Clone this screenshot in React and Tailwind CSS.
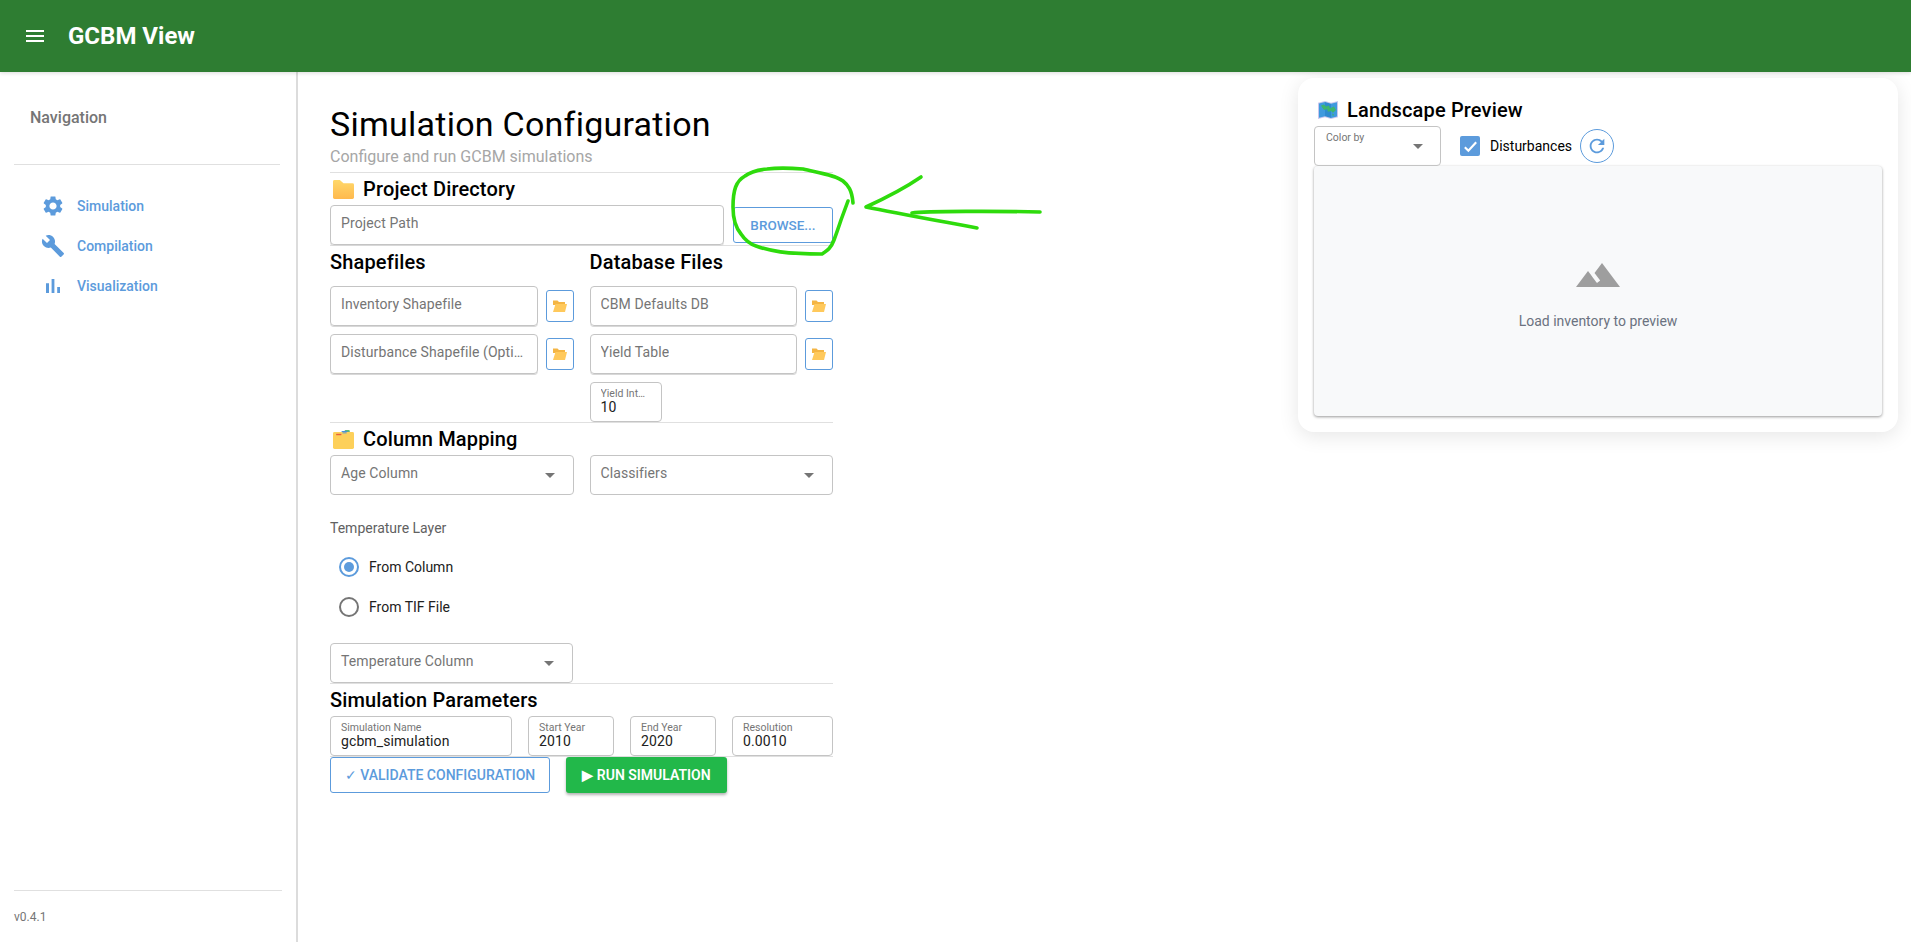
const BLUE = '#5c9bdc'

function MuiIcon({ d, className }) {
  return (
    <svg viewBox="0 0 24 24" fill="currentColor" className={className}>
      <path d={d} />
    </svg>
  )
}

const ICONS = {
  menu: 'M3 18h18v-2H3v2zm0-5h18v-2H3v2zm0-7v2h18V6H3z',
  settings: 'M19.14 12.94c.04-.3.06-.61.06-.94 0-.32-.02-.64-.07-.94l2.03-1.58c.18-.14.23-.41.12-.61l-1.92-3.32c-.12-.22-.37-.29-.59-.22l-2.39.96c-.5-.38-1.03-.7-1.62-.94l-.36-2.54c-.04-.24-.24-.41-.48-.41h-3.84c-.24 0-.43.17-.47.41l-.36 2.54c-.59.24-1.13.57-1.62.94l-2.39-.96c-.22-.08-.47 0-.59.22L2.74 8.87c-.12.21-.08.47.12.61l2.03 1.58c-.05.3-.09.63-.09.94s.02.64.07.94l-2.03 1.58c-.18.14-.23.41-.12.61l1.92 3.32c.12.22.37.29.59.22l2.39-.96c.5.38 1.03.7 1.62.94l.36 2.54c.05.24.24.41.48.41h3.84c.24 0 .44-.17.47-.41l.36-2.54c.59-.24 1.13-.56 1.62-.94l2.39.96c.22.08.47 0 .59-.22l1.92-3.32c.12-.22.07-.47-.12-.61l-2.01-1.58zM12 15.6c-1.98 0-3.6-1.62-3.6-3.6s1.62-3.6 3.6-3.6 3.6 1.62 3.6 3.6-1.62 3.6-3.6 3.6z',
  build: 'M22.7 19l-9.1-9.1c.9-2.3.4-5-1.5-6.9-2-2-5-2.4-7.4-1.3L9 6 6 9 1.6 4.7C.4 7.1.9 10.1 2.9 12.1c1.9 1.9 4.6 2.4 6.9 1.5l9.1 9.1c.4.4 1 .4 1.4 0l2.3-2.3c.5-.4.5-1.1.1-1.4z',
  bars: 'M5 9.2h3V19H5zM10.6 5h2.8v14h-2.8zm5.6 8H19v6h-2.8z',
  terrain: 'M14 6l-3.75 5 2.85 3.8-1.6 1.2C9.81 13.75 7 10 7 10l-6 8h22L14 6z',
  refresh: 'M17.65 6.35C16.2 4.9 14.21 4 12 4c-4.42 0-7.99 3.58-7.99 8s3.57 8 7.99 8c3.73 0 6.84-2.55 7.73-6h-2.08c-.82 2.33-3.04 4-5.65 4-3.31 0-6-2.69-6-6s2.69-6 6-6c1.66 0 3.14.69 4.22 1.78L13 11h7V4l-2.35 2.35z',
}

function FolderEmoji({ className }) {
  return (
    <svg viewBox="0 0 20 20" preserveAspectRatio="none" className={className}>
      <defs>
        <linearGradient id="folderFill" x1="0" y1="0" x2="0" y2="1">
          <stop offset="0" stopColor="#ffd86a" />
          <stop offset="1" stopColor="#ffb94e" />
        </linearGradient>
      </defs>
      <path d="M0 1.500q0-1.500 1.500-1.500h5l3.500 3.500h8.500q1.500 0 1.500 1.500V18.500q0 1.500-1.500 1.500H1.500q-1.500 0-1.500-1.500z" fill="url(#folderFill)" />
    </svg>
  )
}

function OpenFolderEmoji({ className }) {
  return (
    <svg viewBox="0 0 14 12" preserveAspectRatio="none" className={className}>
      <path d="M0 .500h4.500l1.500 1.500h6v3H0z" fill="#f4b544" />
      <path d="M2.500 4H14l-2 8H0z" fill="#ffc95c" />
    </svg>
  )
}

function DividersEmoji({ className }) {
  return (
    <svg viewBox="0 0 20 20" preserveAspectRatio="none" className={className}>
      <rect x="11" y="0" width="5" height="3" rx="1" fill="#5fb97a" />
      <rect x="8" y="1" width="6" height="3" rx="1" fill="#4a90d9" />
      <rect x="0" y="2" width="20" height="18" rx="1.500" fill="#fdd05a" />
      <rect x="3" y="4" width="5" height="1.500" fill="#e8603c" />
      <rect x="9" y="2.500" width="4" height="1" fill="#4a90d9" />
    </svg>
  )
}

function MapEmoji({ className }) {
  return (
    <svg viewBox="0 0 20 20" preserveAspectRatio="none" className={className}>
      <path d="M0 2l7-2 6 2 7-2v18l-7 2-6-2-7 2z" fill="#c9c6ee" />
      <path d="M1 2.700l6-1.700v16l-6 1.700z" fill="#3f9ade" />
      <path d="M7 1l6 2v16l-6-2z" fill="#2f8bcf" />
      <path d="M13 3l6-1.700v16l-6 1.700z" fill="#3f9ade" />
      <path d="M3 5l3-1 2 2 3-1 1 3 4-2 2 4-3 3-2-2-3 1-1-3-3 1-2-3zM14 14l2 1-1 2z" fill="#3fb56f" />
    </svg>
  )
}

function Divider() {
  return <hr className="border-0 h-px bg-[#e0e0e0]" />
}

function SectionTitle({ icon, children }) {
  return (
    <div className="h-[32px] flex items-center">
      {icon}
      <h2 className="text-[20px] font-medium leading-none tracking-[0.15px] text-black">{children}</h2>
    </div>
  )
}

function TextField({ label, className }) {
  return (
    <div className={`h-[40px] rounded-[4px] border border-[#c4c4c4] shadow-[0_1px_0_#d8d8d8] flex items-center pl-[10px] pr-3 pb-[3px] min-w-0 ${className}`}>
      <span className="truncate text-[14px] text-[#757575] tracking-[0.1px]">{label}</span>
    </div>
  )
}

function ValueField({ label, value, className }) {
  return (
    <div className={`h-[40px] rounded-[4px] border border-[#c4c4c4] pl-[10px] pb-[3px] flex flex-col justify-center min-w-0 ${className}`}>
      <span className="truncate text-[10.5px] leading-[13px] text-[#757575]">{label}</span>
      <span className="text-[14px] leading-[15px] tracking-[0.1px] text-[#212121]">{value}</span>
    </div>
  )
}

function SelectField({ label, className }) {
  return (
    <div className={`h-[40px] rounded-[4px] border border-[#c4c4c4] flex items-center justify-between pl-[10px] pr-[18px] ${className}`}>
      <span className="text-[14px] text-[#757575] tracking-[0.1px] pb-[3px]">{label}</span>
      <span className="w-0 h-0 border-x-[5px] border-t-[5px] border-x-transparent border-t-[#757575]" />
    </div>
  )
}

function FileRow({ label }) {
  return (
    <div className="flex items-center gap-[8px]">
      <TextField label={label} className="flex-1" />
      <button className="w-[28px] h-[32px] rounded-[3px] border border-[#5c9bdc] flex items-center justify-center shrink-0">
        <OpenFolderEmoji className="w-[14px] h-[12px]" />
      </button>
    </div>
  )
}

function NavItem({ icon, label }) {
  return (
    <div className="h-[40px] flex items-center">
      <div className="w-[24px] ml-[41px] flex justify-center" style={{ color: BLUE }}>
        <MuiIcon d={icon} className="w-[24px] h-[24px]" />
      </div>
      <span className="ml-[12px] text-[14px] font-medium leading-none" style={{ color: BLUE }}>{label}</span>
    </div>
  )
}

function Radio({ checked, label }) {
  return (
    <div className="h-[40px] flex items-center pl-[9px]">
      {checked ? (
        <span className="w-[20px] h-[20px] rounded-full border-2 border-[#5c9bdc] flex items-center justify-center">
          <span className="w-[10px] h-[10px] rounded-full bg-[#5c9bdc]" />
        </span>
      ) : (
        <span className="w-[20px] h-[20px] rounded-full border-2 border-[#757575]" />
      )}
      <span className="ml-[10px] text-[14px] text-[#212121]">{label}</span>
    </div>
  )
}

function Annotation() {
  // hand-drawn marker on top of the screenshot
  return (
    <svg className="absolute left-0 top-0 w-full h-full pointer-events-none" viewBox="0 0 1911 942" fill="none" stroke="#2edb0c" strokeWidth="3.600" strokeLinecap="round" strokeLinejoin="round">
      <path d="M853 203C852 190 848 185 843 181C835 175 820 173 803 169C790 168 775 168 767 169C757 170 750 172 745 176C736 181 733 190 733 207C733 220 736 228 741 234C745 240 750 244 756 246C770 251 785 254 822 254C828 250 831 248 834 240C837 232 839 226 841 220L848 201" />
      <path d="M921 177C905 188 890 196 866 207C895 213 945 222 977 228" />
      <path d="M912 213C925 211 1000 211 1040 212" />
    </svg>
  )
}

export default function App() {
  return (
    <div className="relative h-[942px] bg-white font-['Roboto',sans-serif] overflow-hidden flex flex-col">
      {/* Top bar */}
      <header className="relative z-10 h-[72px] bg-[#2e7d32] flex items-center shrink-0 shadow-[0_1px_4px_rgba(0,0,0,0.15)]">
        <MuiIcon d={ICONS.menu} className="w-[24px] h-[24px] ml-[23px] text-white" />
        <h1 className="ml-[21px] text-[24px] font-bold text-white leading-none">GCBM View</h1>
      </header>

      <div className="flex flex-1 min-h-0">
        {/* Sidebar */}
        <aside className="w-[298px] shrink-0 border-r-2 border-[#dcdcdc] flex flex-col">
          <p className="mt-[37px] ml-[30px] text-[16px] font-medium leading-[18px] text-[#757575]">Navigation</p>
          <hr className="mt-[37px] ml-[14px] mr-[16px] border-0 h-px bg-[#e0e0e0]" />
          <nav className="mt-[21px] flex flex-col">
            <NavItem icon={ICONS.settings} label="Simulation" />
            <NavItem icon={ICONS.build} label="Compilation" />
            <NavItem icon={ICONS.bars} label="Visualization" />
          </nav>
          <div className="mt-auto mx-[14px] h-[52px]">
            <hr className="border-0 h-px bg-[#e0e0e0]" />
            <p className="mt-[19px] text-[12px] leading-[14px] text-[#757575]">v0.4.1</p>
          </div>
        </aside>

        {/* Main column */}
        <main className="w-[503px] ml-[32px] pt-[30px] shrink-0">
          <h1 className="h-[44px] text-[34px] leading-[44px] tracking-[0.25px] text-black">Simulation Configuration</h1>
          <p className="h-[22px] text-[16px] leading-[22px] text-[#a6a6a6]">Configure and run GCBM simulations</p>
          <div className="mt-[4px]"><Divider /></div>

          <SectionTitle icon={<FolderEmoji className="w-[21px] h-[19px] ml-[3px] mr-[9px]" />}>Project Directory</SectionTitle>
          <div className="flex items-center gap-[9px]">
            <TextField label="Project Path" className="flex-1" />
            <button className="w-[100px] h-[36px] rounded-[3px] border border-[#5c9bdc] text-[13.5px] font-medium text-[#5c9bdc]">BROWSE...</button>
          </div>
          <Divider />

          <div className="grid grid-cols-2 gap-x-[16px]">
            <div className="flex flex-col gap-[8px]">
              <div className="h-[32px] flex items-center text-[20px] font-medium leading-none tracking-[0.15px] text-black">Shapefiles</div>
              <FileRow label="Inventory Shapefile" />
              <FileRow label="Disturbance Shapefile (Optional)" />
            </div>
            <div className="flex flex-col gap-[8px]">
              <div className="h-[32px] flex items-center text-[20px] font-medium leading-none tracking-[0.15px] text-black">Database Files</div>
              <FileRow label="CBM Defaults DB" />
              <FileRow label="Yield Table" />
              <ValueField label="Yield Interval" value="10" className="w-[72px] pr-[12px]" />
            </div>
          </div>
          <Divider />

          <SectionTitle icon={<DividersEmoji className="w-[21px] h-[19px] ml-[3px] mr-[9px]" />}>Column Mapping</SectionTitle>
          <div className="grid grid-cols-2 gap-x-[16px]">
            <SelectField label="Age Column" />
            <SelectField label="Classifiers" />
          </div>

          <p className="mt-[24px] text-[14px] leading-[18px] text-[#616161]">Temperature Layer</p>
          <div className="mt-[10px] flex flex-col">
            <Radio checked label="From Column" />
            <Radio label="From TIF File" />
          </div>
          <SelectField label="Temperature Column" className="mt-[16px] w-[243px]" />
          <Divider />

          <div className="h-[32px] flex items-center text-[20px] font-medium leading-none tracking-[0.15px] text-black">Simulation Parameters</div>
          <div className="flex gap-[16px]">
            <ValueField label="Simulation Name" value="gcbm_simulation" className="w-[182px]" />
            <ValueField label="Start Year" value="2010" className="w-[86px]" />
            <ValueField label="End Year" value="2020" className="w-[86px]" />
            <ValueField label="Resolution" value="0.0010" className="flex-1" />
          </div>
          <Divider />
          <div className="flex gap-[16px]">
            <button className="w-[220px] h-[36px] rounded-[3px] border border-[#5c9bdc] text-[14px] font-medium text-[#5c9bdc]"><span className="font-light">✓</span> VALIDATE CONFIGURATION</button>
            <button className="w-[161px] h-[36px] rounded-[3px] bg-[#22b84a] text-[14px] font-semibold text-white shadow-[0_2px_3px_rgba(0,0,0,0.3)]">▶ RUN SIMULATION</button>
          </div>
        </main>

        {/* Preview panel */}
        <section className="ml-auto mr-[13px] mt-[6px] w-[600px] h-[354px] rounded-[16px] bg-white shadow-[0_4px_20px_rgba(0,0,0,0.1)] px-[16px] pt-[16px] flex flex-col">
          <div className="h-[32px] flex items-center">
            <MapEmoji className="w-[20px] h-[18px] ml-[4px] mr-[9px]" />
            <h2 className="text-[20px] font-medium leading-none tracking-[0.15px] text-black">Landscape Preview</h2>
          </div>
          <div className="flex items-center h-[40px]">
            <div className="relative w-[127px] h-[40px] rounded-[4px] border border-[#c4c4c4] flex items-center justify-end pr-[17px]">
              <span className="absolute left-[11px] top-[4px] text-[10.5px] leading-[13px] text-[#757575]">Color by</span>
              <span className="w-0 h-0 border-x-[5px] border-t-[5px] border-x-transparent border-t-[#757575]" />
            </div>
            <span className="ml-[19px] w-[20px] h-[20px] rounded-[2px] bg-[#5c9bdc] flex items-center justify-center">
              <svg viewBox="0 0 24 24" className="w-[17px] h-[17px]" fill="none" stroke="white" strokeWidth="3"><path d="M4 13l5 5L20 6" /></svg>
            </span>
            <span className="ml-[10px] text-[14px] text-black">Disturbances</span>
            <button className="ml-[8px] w-[34px] h-[34px] rounded-full border border-[#5c9bdc] flex items-center justify-center text-[#5c9bdc]">
              <MuiIcon d={ICONS.refresh} className="w-[22px] h-[22px]" />
            </button>
          </div>
          <div className="h-[250px] rounded-[4px] bg-[#f8f9fa] shadow-[0_1px_3px_rgba(0,0,0,0.4)] flex flex-col items-center justify-center">
            <MuiIcon d={ICONS.terrain} className="w-[48px] h-[48px] text-[#9e9e9e]" />
            <p className="mt-[12px] text-[14px] text-[#6b7280]">Load inventory to preview</p>
          </div>
        </section>
      </div>

      <Annotation />
    </div>
  )
}
